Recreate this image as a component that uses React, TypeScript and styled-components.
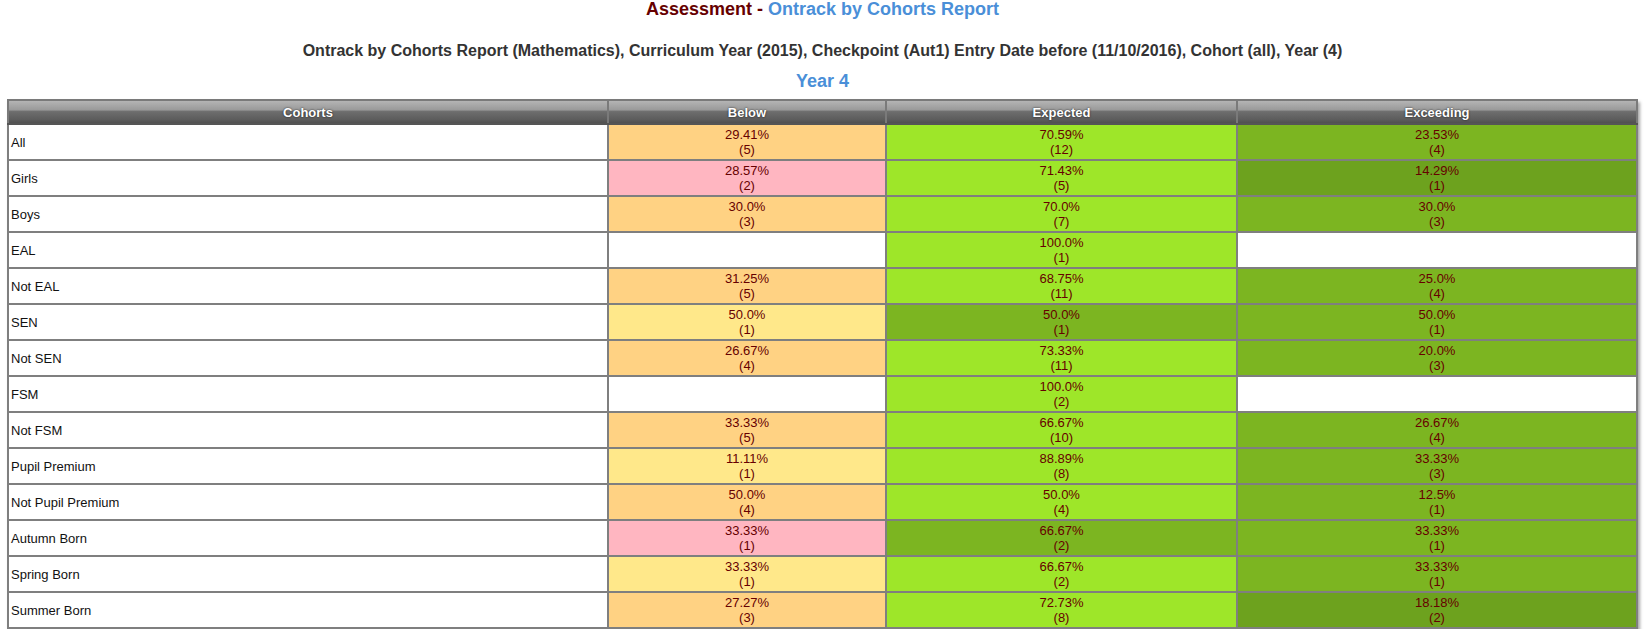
import React from "react";
import styled, { createGlobalStyle } from "styled-components";

const Global = createGlobalStyle`
  html, body { margin: 0; padding: 0; background: #fff; }
  body { font-family: "Liberation Sans", Arial, Helvetica, sans-serif; }
`;

type Tone = "orange" | "pink" | "yellow" | "light" | "mid" | "dark" | "none";

const toneColor: Record<Tone, string> = {
  orange: "#ffd283",
  pink: "#ffb6c1",
  yellow: "#ffe88a",
  light: "#9ee629",
  mid: "#7cb521",
  dark: "#6da21e",
  none: "#ffffff",
};

type Cell = { pct: string; n: string; tone: Tone } | null;

type Row = { name: string; below: Cell; expected: Cell; exceeding: Cell };

const c = (pct: string, n: string, tone: Tone): Cell => ({ pct, n, tone });

const rows: Row[] = [
  { name: "All", below: c("29.41%", "5", "orange"), expected: c("70.59%", "12", "light"), exceeding: c("23.53%", "4", "mid") },
  { name: "Girls", below: c("28.57%", "2", "pink"), expected: c("71.43%", "5", "light"), exceeding: c("14.29%", "1", "dark") },
  { name: "Boys", below: c("30.0%", "3", "orange"), expected: c("70.0%", "7", "light"), exceeding: c("30.0%", "3", "mid") },
  { name: "EAL", below: null, expected: c("100.0%", "1", "light"), exceeding: null },
  { name: "Not EAL", below: c("31.25%", "5", "orange"), expected: c("68.75%", "11", "light"), exceeding: c("25.0%", "4", "mid") },
  { name: "SEN", below: c("50.0%", "1", "yellow"), expected: c("50.0%", "1", "mid"), exceeding: c("50.0%", "1", "mid") },
  { name: "Not SEN", below: c("26.67%", "4", "orange"), expected: c("73.33%", "11", "light"), exceeding: c("20.0%", "3", "mid") },
  { name: "FSM", below: null, expected: c("100.0%", "2", "light"), exceeding: null },
  { name: "Not FSM", below: c("33.33%", "5", "orange"), expected: c("66.67%", "10", "light"), exceeding: c("26.67%", "4", "mid") },
  { name: "Pupil Premium", below: c("11.11%", "1", "yellow"), expected: c("88.89%", "8", "light"), exceeding: c("33.33%", "3", "mid") },
  { name: "Not Pupil Premium", below: c("50.0%", "4", "orange"), expected: c("50.0%", "4", "light"), exceeding: c("12.5%", "1", "mid") },
  { name: "Autumn Born", below: c("33.33%", "1", "pink"), expected: c("66.67%", "2", "mid"), exceeding: c("33.33%", "1", "mid") },
  { name: "Spring Born", below: c("33.33%", "1", "yellow"), expected: c("66.67%", "2", "light"), exceeding: c("33.33%", "1", "mid") },
  { name: "Summer Born", below: c("27.27%", "3", "orange"), expected: c("72.73%", "8", "light"), exceeding: c("18.18%", "2", "dark") },
];

const Page = styled.div`
  padding: 0 10px 0 7px;
`;

const Title = styled.h1`
  margin: 0;
  font-size: 18px;
  line-height: 18px;
  font-weight: bold;
  text-align: center;
  color: #660000;
`;

const Blue = styled.span`
  color: #4a8fd8;
`;

const Subtitle = styled.h2`
  margin: 24px 0 0;
  font-size: 16px;
  line-height: 18px;
  font-weight: bold;
  text-align: center;
  color: #333333;
`;

const YearHeading = styled.h3`
  margin: 11px 0 0;
  font-size: 18px;
  line-height: 20px;
  font-weight: bold;
  text-align: center;
  color: #4a8fd8;
`;

const Table = styled.table`
  margin-top: 8px;
  width: 100%;
  border-collapse: collapse;
  border: 2px solid #777;
  box-shadow: 2px 3px 3px rgba(0, 0, 0, 0.35);
  font-size: 13px;
`;

const Th = styled.th<{ $w?: string }>`
  width: ${(p) => p.$w ?? "auto"};
  height: 22px;
  padding: 0;
  border: 2px solid #7a7a7a;
  border-bottom-color: #555;
  background: linear-gradient(
    to bottom,
    #b4b4b4 0%,
    #9a9a9a 40%,
    #6e6e6e 48%,
    #5c5c5c 85%,
    #505050 100%
  );
  color: #ffffff;
  font-size: 13px;
  font-weight: bold;
  text-shadow: 0 0 2px rgba(0, 0, 0, 0.8);
  text-align: center;
  vertical-align: middle;
`;

const NameCell = styled.td`
  padding: 2px 2px;
  height: 30px;
  border: 2px solid #7f7f7f;
  color: #111;
  text-align: left;
  vertical-align: middle;
  line-height: 15px;
  background: #fff;
`;

const ValueCell = styled.td<{ $tone: Tone }>`
  padding: 2px 2px;
  height: 30px;
  border: 2px solid #7f7f7f;
  background: ${(p) => toneColor[p.$tone]};
  color: #660000;
  text-align: center;
  vertical-align: middle;
  line-height: 15px;
`;

const Line = styled.div``;

function Value({ cell }: { cell: Cell }) {
  if (!cell) return <ValueCell $tone="none" />;
  return (
    <ValueCell $tone={cell.tone}>
      <Line>{cell.pct}</Line>
      <Line>({cell.n})</Line>
    </ValueCell>
  );
}

export default function App() {
  return (
    <Page>
      <Global />
      <Title>
        Assessment - <Blue>Ontrack by Cohorts Report</Blue>
      </Title>
      <Subtitle>
        Ontrack by Cohorts Report (Mathematics), Curriculum Year (2015), Checkpoint (Aut1) Entry Date before
        (11/10/2016), Cohort (all), Year (4)
      </Subtitle>
      <YearHeading>Year 4</YearHeading>
      <Table>
        <thead>
          <tr>
            <Th $w="598px">Cohorts</Th>
            <Th $w="276px">Below</Th>
            <Th $w="349px">Expected</Th>
            <Th>Exceeding</Th>
          </tr>
        </thead>
        <tbody>
          {rows.map((r) => (
            <tr key={r.name}>
              <NameCell>{r.name}</NameCell>
              <Value cell={r.below} />
              <Value cell={r.expected} />
              <Value cell={r.exceeding} />
            </tr>
          ))}
        </tbody>
      </Table>
    </Page>
  );
}
